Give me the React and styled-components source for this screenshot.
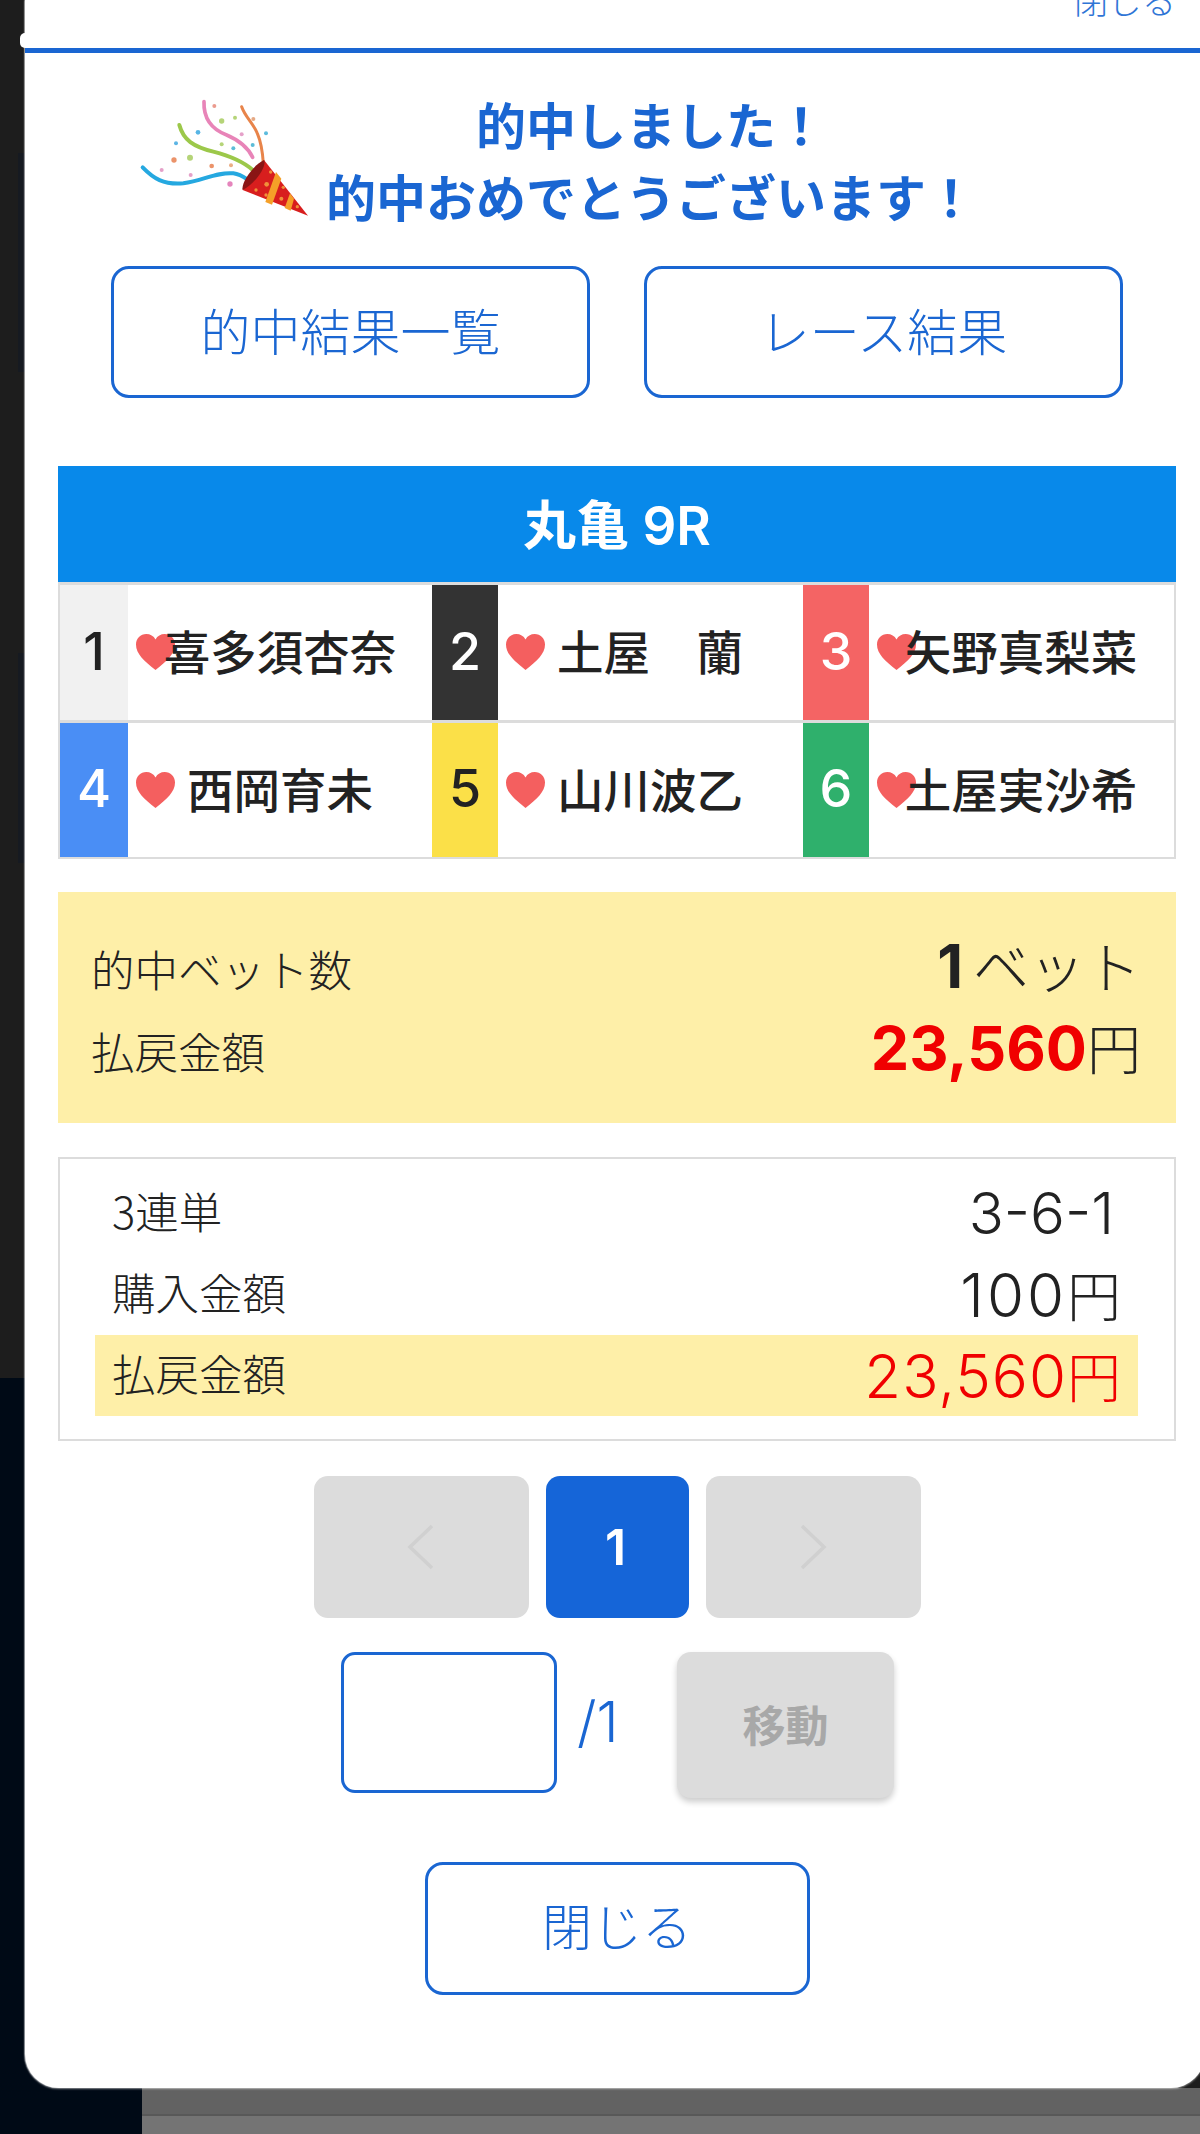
import React from "react";
import styled, { createGlobalStyle } from "styled-components";

const Global = createGlobalStyle`
  html, body { margin: 0; padding: 0; }
  body { font-family: "Noto Sans CJK JP", "Noto Sans", sans-serif; }
  * { box-sizing: border-box; }
`;

const BLUE = "#1a66d2";
const NUM = `"Inter", "Noto Sans CJK JP", sans-serif`;

const Page = styled.div`
  position: relative;
  width: 1200px;
  height: 2134px;
  overflow: hidden;
  background:
    linear-gradient(#626262 0 26px, #585858 26px 28px, #747474 28px) 142px 2088px / 1058px 46px no-repeat,
    linear-gradient(#000a16, #000a16) 0 1378px / 142px 756px no-repeat,
    linear-gradient(#161a21, #161a21) 18px 153px / 7px 219px no-repeat,
    linear-gradient(#161a21, #161a21) 18px 653px / 7px 210px no-repeat,
    #1d1d1d;
`;

const Modal = styled.section`
  position: relative;
  margin-left: 25px;
  width: 1180px;
  height: 2088px;
  background: #fff;
  border-radius: 0 0 34px 34px;
  box-shadow: 0 1px 2px rgba(255, 255, 255, 0.5), -1px 0 1px rgba(255, 255, 255, 0.5);
`;

const Notch = styled.span`
  position: absolute;
  left: -5px;
  top: 33px;
  width: 12px;
  height: 15px;
  background: #fff;
  border-radius: 5px 0 0 5px;
`;

const Header = styled.header`
  height: 53px;
  border-bottom: 5px solid ${BLUE};
  display: flex;
  justify-content: flex-end;
  padding-right: 29px;
  overflow: hidden;
`;

const HeaderClose = styled.span`
  margin-top: -23px;
  font-size: 34px;
  line-height: 46px;
  font-weight: 300;
  color: #2f75d6;
`;

const Body = styled.div`
  display: flex;
  flex-direction: column;
  padding: 34px 29px 0 33px;
`;

const Celebrate = styled.div`
  display: flex;
  align-items: flex-start;
  margin-left: 62px;
  gap: 6px;
`;

const Popper = styled.svg`
  width: 200px;
  height: 140px;
  margin-top: 3px;
  flex: none;
`;

const Title = styled.h1`
  margin: 0;
  width: 650px;
  text-align: center;
  font-size: 50px;
  line-height: 72px;
  font-weight: 700;
  color: ${BLUE};
  white-space: nowrap;
`;

const LinkRow = styled.div`
  display: flex;
  justify-content: center;
  gap: 54px;
  margin-top: 35px;
`;

const OutlineButton = styled.button`
  width: ${(p) => p.$w}px;
  height: ${(p) => p.$h}px;
  background: #fff;
  border: 3px solid ${BLUE};
  border-radius: 18px;
  font-family: inherit;
  font-size: 50px;
  font-weight: 300;
  color: ${BLUE};
  padding: 0 0 ${(p) => p.$pb}px;
`;

const RaceTitle = styled.h2`
  margin: 68px 0 0;
  height: 116px;
  display: flex;
  align-items: center;
  justify-content: center;
  padding-bottom: 4px;
  background: #0889ea;
  color: #fff;
  font-family: ${NUM};
  font-size: 53px;
  font-weight: 600;
`;

const RacerGrid = styled.div`
  display: grid;
  grid-template-columns: 372px 371px 1fr;
  row-gap: 3px;
  padding: 3px 2px 2px;
  background: #dcdcdc;
`;

const Racer = styled.div`
  height: 134.5px;
  display: flex;
  align-items: stretch;
  background: #fff;
`;

const Lane = styled.div`
  width: ${(p) => (p.$wide ? 68 : 66)}px;
  flex: none;
  display: flex;
  align-items: center;
  justify-content: center;
  padding-bottom: 2px;
  background: ${(p) => p.$bg};
  color: ${(p) => p.$fg};
  font-family: ${NUM};
  font-size: 52px;
  font-weight: 500;
`;

const Heart = styled.svg`
  width: 39px;
  height: 36px;
  flex: none;
  margin: 49px 0 0 8px;
`;

const RacerName = styled.div`
  width: 210px;
  flex: none;
  display: flex;
  justify-content: center;
  align-items: center;
  padding-bottom: 5px;
  font-size: 46.5px;
  font-weight: 500;
  color: #222;
  white-space: nowrap;
`;

const Summary = styled.div`
  margin-top: 33px;
  height: 231px;
  display: flex;
  flex-direction: column;
  justify-content: center;
  padding: 0 35px 0 33px;
  background: #feefa8;
`;

const Row = styled.div`
  display: flex;
  justify-content: space-between;
  align-items: center;
  height: ${(p) => p.$h}px;
`;

const Label = styled.span`
  font-size: 43.5px;
  font-weight: 300;
  line-height: 1.2;
  color: #222;
`;

const SummaryLabel = styled(Label)`
  margin-top: 5px;
`;

const DetailLabel = styled(Label)`
  margin-bottom: 5px;
`;

const Value = styled.span`
  display: flex;
  align-items: baseline;
  font-family: ${NUM};
  font-size: 54px;
  line-height: 1.2;
  font-weight: 300;
  color: ${(p) => p.$color || "#222"};
`;

const Digits = styled.span`
  font-size: ${(p) => p.$size}px;
  letter-spacing: ${(p) => p.$track || 0}px;
  margin-right: ${(p) => p.$gap || 0}px;
`;

const Emph = styled.span`
  font-weight: 700;
  color: ${(p) => p.$color || "#222"};
  font-size: ${(p) => p.$size}px;
  margin-right: ${(p) => p.$gap || 0}px;
`;

const Unit = styled.span`
  font-size: 56px;
`;

const DetailBox = styled.div`
  margin-top: 34px;
  height: 284px;
  border: 2px solid #dcdcdc;
  padding: 14px 36px 0 35px;
`;

const DetailRow = styled(Row)`
  padding: 0 17px;
  background: ${(p) => (p.$hi ? "#feefa8" : "transparent")};
`;

const Pager = styled.nav`
  display: flex;
  justify-content: center;
  gap: 17px;
  margin-top: 35px;
`;

const PageButton = styled.div`
  width: ${(p) => (p.$active ? 143 : 215)}px;
  height: 142px;
  display: flex;
  align-items: center;
  justify-content: center;
  padding-right: ${(p) => (p.$active ? 3 : 0)}px;
  border-radius: 14px;
  background: ${(p) => (p.$active ? "#1565d8" : "#dcdcdc")};
  color: #fff;
  font-family: ${NUM};
  font-size: 50px;
  font-weight: 600;
`;

const Chevron = styled.svg`
  width: 28px;
  height: 46px;
`;

const JumpRow = styled.div`
  display: flex;
  justify-content: center;
  align-items: flex-start;
  margin-top: 34px;
  padding-left: 1px;
`;

const JumpInput = styled.input`
  width: 216px;
  height: 141px;
  border: 3px solid ${BLUE};
  border-radius: 14px;
  background: #fff;
  outline: none;
`;

const JumpTotal = styled.span`
  width: 120px;
  padding-left: 20px;
  line-height: 141px;
  font-family: ${NUM};
  font-size: 56px;
  font-weight: 300;
  color: ${BLUE};
`;

const MoveButton = styled.div`
  width: 217px;
  height: 146px;
  display: flex;
  align-items: center;
  justify-content: center;
  padding-bottom: 4px;
  border-radius: 14px;
  background: #dcdcdc;
  color: #a8a8a8;
  font-size: 43px;
  font-weight: 700;
  box-shadow: 0 4px 6px rgba(0, 0, 0, 0.2);
`;

const CloseRow = styled.div`
  display: flex;
  justify-content: center;
  margin-top: 64px;
`;

const racers = [
  { n: 1, name: "喜多須杏奈", bg: "#f1f1f1", fg: "#222", wide: true },
  { n: 2, name: "土屋　蘭", bg: "#333333", fg: "#fff" },
  { n: 3, name: "矢野真梨菜", bg: "#f46464", fg: "#fff" },
  { n: 4, name: "西岡育未", bg: "#4a8ef5", fg: "#fff", wide: true },
  { n: 5, name: "山川波乙", bg: "#fbe048", fg: "#222" },
  { n: 6, name: "土屋実沙希", bg: "#2fb06c", fg: "#fff" },
];

const dots = [
  [283, 48, 6, "#e88a7a"], [305, 93, 8, "#a8cc60"], [345, 83, 6, "#a8cc60"], [400, 87, 6, "#e09a70"],
  [234, 127, 7, "#3aa8e0"], [365, 133, 6, "#e090c0"], [438, 130, 6, "#40b0d8"], [168, 160, 6, "#40a8e0"],
  [305, 163, 6, "#a8cc60"], [340, 175, 6, "#40b0d0"], [398, 165, 6, "#40b0d0"], [162, 210, 8, "#e88050"],
  [210, 203, 9, "#a8cc60"], [125, 240, 6, "#e090c0"], [212, 255, 6, "#e090c0"], [275, 228, 7, "#e88050"],
  [333, 226, 6, "#e8a070"], [330, 282, 8, "#e070b0"],
];

const conf = [
  [408, 300, 5], [440, 283, 7], [452, 246, 5], [490, 292, 5], [438, 315, 5], [484, 326, 6], [532, 350, 5],
];

function PartyPopper() {
  return (
    <Popper viewBox="0 0 600 420" aria-hidden="true">
      <g fill="none" strokeLinecap="round">
        <path d="M68 232C100 265 130 285 190 280C250 272 290 245 340 250C355 252 370 260 382 268" stroke="#25a8e0" strokeWidth="12" />
        <path d="M178 105C190 150 220 170 280 185C330 198 370 215 398 240" stroke="#9cc84a" strokeWidth="12" />
        <path d="M252 35C250 90 280 120 320 135C355 150 385 175 398 202" stroke="#e884b8" strokeWidth="11" />
        <path d="M365 50C375 80 400 100 412 130C425 160 428 190 430 220" stroke="#e8844a" strokeWidth="9" />
      </g>
      {dots.map(([cx, cy, r, fill]) => (
        <circle key={`${cx}-${cy}`} cx={cx} cy={cy} r={r} fill={fill} opacity="0.85" />
      ))}
      <polygon points="432,210 564,377 368,300" fill="#d81e1e" />
      <path d="M432 210C442 232 400 285 368 300C362 280 398 226 432 210Z" fill="#8a1515" />
      <polygon points="468,246 484,266 456,344 436,336" fill="#f5a028" />
      <polygon points="510,310 522,326 512,362 494,354" fill="#f5a028" />
      {conf.map(([cx, cy, r]) => (
        <circle key={`${cx}-${cy}`} cx={cx} cy={cy} r={r} fill="#f0903a" />
      ))}
    </Popper>
  );
}

function HeartIcon() {
  return (
    <Heart viewBox="0 0 38 36" preserveAspectRatio="none" aria-hidden="true">
      <path d="M19 36C8 27 0 20 0 10.5C0 4.5 4.5 0 10 0C13.8 0 17.2 2 19 5.4C20.8 2 24.2 0 28 0C33.5 0 38 4.5 38 10.5C38 20 30 27 19 36Z" fill="#f45f5f" />
    </Heart>
  );
}

export default function App() {
  return (
    <Page>
      <Global />
      <Modal>
        <Notch />
        <Header>
          <HeaderClose>閉じる</HeaderClose>
        </Header>
        <Body>
          <Celebrate>
            <PartyPopper />
            <Title>
              的中しました！
              <br />
              的中おめでとうございます！
            </Title>
          </Celebrate>

          <LinkRow>
            <OutlineButton $w={479} $h={132} $pb={6}>的中結果一覧</OutlineButton>
            <OutlineButton $w={479} $h={132} $pb={6}>レース結果</OutlineButton>
          </LinkRow>

          <RaceTitle>丸亀 9R</RaceTitle>
          <RacerGrid>
            {racers.map((r) => (
              <Racer key={r.n}>
                <Lane $bg={r.bg} $fg={r.fg} $wide={r.wide}>{r.n}</Lane>
                <HeartIcon />
                <RacerName>{r.name}</RacerName>
              </Racer>
            ))}
          </RacerGrid>

          <Summary>
            <Row $h={82}>
              <SummaryLabel>的中ベット数</SummaryLabel>
              <Value>
                <Emph $size={60} $gap={10}>1</Emph><Unit>ベット</Unit>
              </Value>
            </Row>
            <Row $h={82}>
              <SummaryLabel>払戻金額</SummaryLabel>
              <Value>
                <Emph $size={61} $color="#f00000">23,560</Emph>円
              </Value>
            </Row>
          </Summary>

          <DetailBox>
            <DetailRow $h={81}>
              <DetailLabel>3連単</DetailLabel>
              <Value><Digits $size={58} $gap={7}>3-6-1</Digits></Value>
            </DetailRow>
            <DetailRow $h={81}>
              <DetailLabel>購入金額</DetailLabel>
              <Value><Digits $size={60} $track={3}>100</Digits>円</Value>
            </DetailRow>
            <DetailRow $h={81} $hi>
              <DetailLabel>払戻金額</DetailLabel>
              <Value $color="#f00000"><Digits $size={60} $track={1}>23,560</Digits>円</Value>
            </DetailRow>
          </DetailBox>

          <Pager>
            <PageButton>
              <Chevron viewBox="0 0 28 46" aria-hidden="true">
                <polyline points="25,2 3,23 25,44" fill="none" stroke="#d0d0d0" strokeWidth="3.5" />
              </Chevron>
            </PageButton>
            <PageButton $active>1</PageButton>
            <PageButton>
              <Chevron viewBox="0 0 28 46" aria-hidden="true">
                <polyline points="3,2 25,23 3,44" fill="none" stroke="#d0d0d0" strokeWidth="3.5" />
              </Chevron>
            </PageButton>
          </Pager>

          <JumpRow>
            <JumpInput type="text" />
            <JumpTotal>/1</JumpTotal>
            <MoveButton>移動</MoveButton>
          </JumpRow>

          <CloseRow>
            <OutlineButton $w={385} $h={133} $pb={9}>閉じる</OutlineButton>
          </CloseRow>
        </Body>
      </Modal>
    </Page>
  );
}
